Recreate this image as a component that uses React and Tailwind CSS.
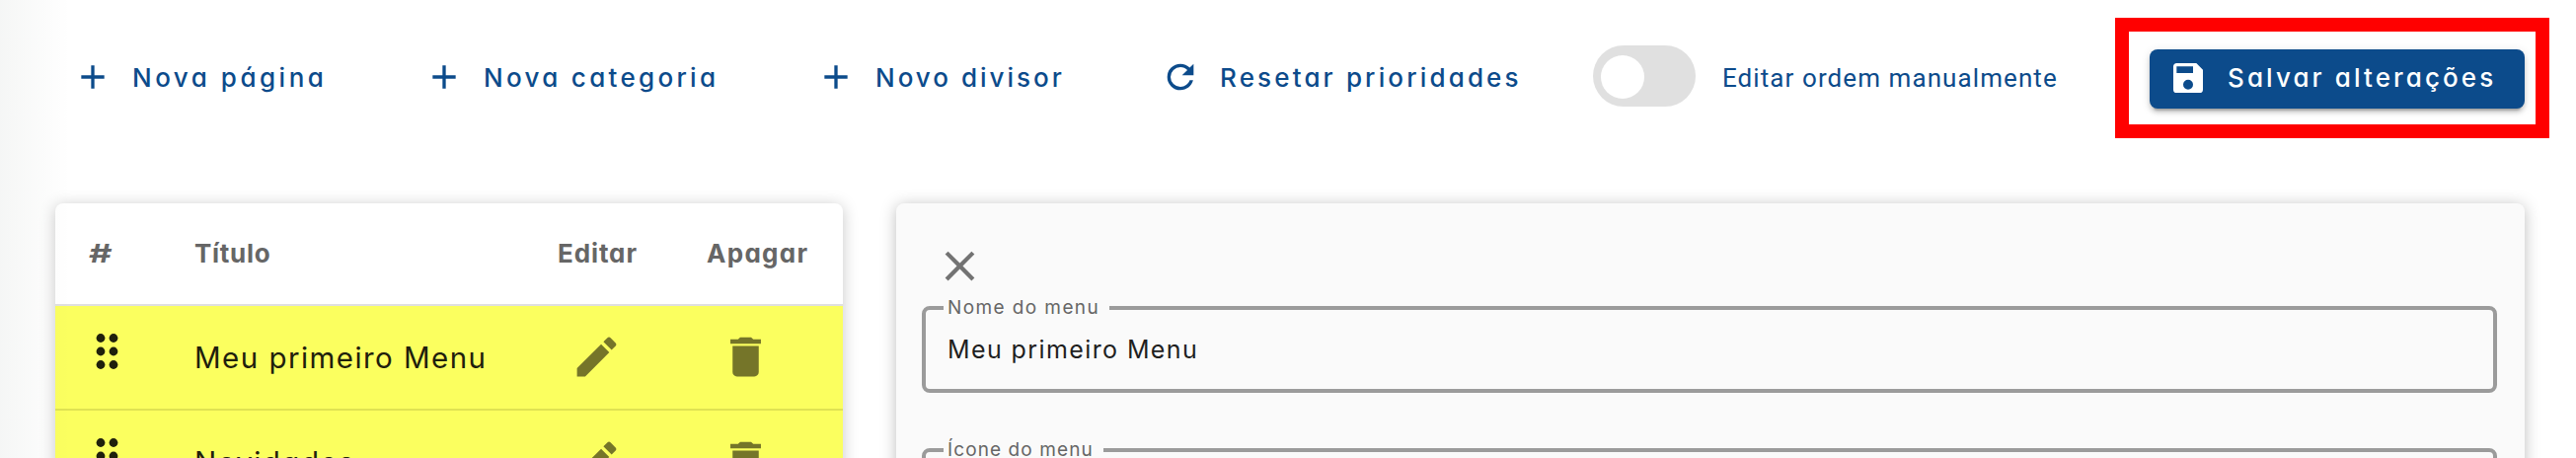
const ICONS = {
  plus: "M19 13H13V19H11V13H5V11H11V5H13V11H19V13Z",
  refresh:
    "M17.65 6.35C16.2 4.9 14.21 4 12 4A8 8 0 0 0 4 12A8 8 0 0 0 12 20C15.73 20 18.84 17.45 19.73 14H17.65C16.83 16.33 14.61 18 12 18A6 6 0 0 1 6 12A6 6 0 0 1 12 6C13.66 6 15.14 6.69 16.22 7.78L13 11H20V4L17.65 6.35Z",
  save: "M15 9H5V5H15M12 19A3 3 0 0 1 9 16A3 3 0 0 1 12 13A3 3 0 0 1 15 16A3 3 0 0 1 12 19M17 3H5C3.89 3 3 3.9 3 5V19A2 2 0 0 0 5 21H19A2 2 0 0 0 21 19V7L17 3Z",
  pencil:
    "M20.71 7.04C21.1 6.65 21.1 6 20.71 5.63L18.37 3.29C18 2.9 17.35 2.9 16.96 3.29L15.12 5.12L18.87 8.87M3 17.25V21H6.75L17.81 9.93L14.06 6.18L3 17.25Z",
  trash:
    "M19 4H15.5L14.5 3H9.5L8.5 4H5V6H19M6 19A2 2 0 0 0 8 21H16A2 2 0 0 0 18 19V7H6V19Z",
  close:
    "M19 6.41L17.59 5L12 10.59L6.41 5L5 6.41L10.59 12L5 17.59L6.41 19L12 13.41L17.59 19L19 17.59L13.41 12L19 6.41Z",
};

function Icon({ name, className }) {
  return (
    <svg viewBox="0 0 24 24" fill="currentColor" fillRule="evenodd" className={`shrink-0 ${className}`}>
      <path d={ICONS[name]} />
    </svg>
  );
}

function ToolButton({ icon, label, className, text }) {
  return (
    <div className={`flex shrink-0 items-start gap-5 ${className}`}>
      <Icon name={icon} className="size-10" />
      <span className={`pt-px text-[26px] leading-10 font-medium ${text}`}>{label}</span>
    </div>
  );
}

function Row({ title, text }) {
  return (
    <div className="flex h-[106px] shrink-0 border-b-2 border-[#dfe252] bg-[#fbff5f] text-[#1f200c]">
      <div className="w-[142px] pt-7 pl-[41px]">
        <svg viewBox="0 0 24 38" className="h-[38px] w-6" fill="currentColor">
          {[4.5, 18, 31.5].map((y) => (
            <g key={y}>
              <circle cx="5" cy={y} r="4.4" />
              <circle cx="18" cy={y} r="4.4" />
            </g>
          ))}
        </svg>
      </div>
      <div className={`-ml-px w-[381px] pt-8 text-[29.5px] leading-10 ${text}`}>{title}</div>
      <Icon name="pencil" className="mt-[25px] size-[53px] text-[#757529]" />
      <Icon name="trash" className="mt-[25px] ml-[98px] size-[53px] text-[#757529]" />
    </div>
  );
}

function Field({ label, value, labelText, gap }) {
  return (
    <div className="relative h-[88px] shrink-0 rounded-lg border-4 border-[#9b9b9b]">
      <div className={`absolute -top-4 left-[18px] h-7 bg-[#fafafa] pl-[4px] text-[19px] leading-7 whitespace-nowrap text-[#666] ${gap} ${labelText}`}>
        {label}
      </div>
      <div className="pt-[24px] pl-[22px] text-[25px] leading-8 tracking-[1.4px] text-[#1f1f1f]">{value}</div>
    </div>
  );
}

export default function App() {
  return (
    <div className="relative flex h-[464px] w-[2610px] flex-col overflow-hidden bg-white font-[Inter,sans-serif] whitespace-nowrap [font-feature-settings:'cv11']">
      <div className="flex h-[206px] shrink-0 items-start text-[#0c4b8b]">
        <ToolButton icon="plus" label="Nova página" className="mt-[58px] ml-[74px] w-[356px]" text="tracking-[3.5px]" />
        <ToolButton icon="plus" label="Nova categoria" className="mt-[58px] w-[397px]" text="tracking-[3.3px]" />
        <ToolButton icon="plus" label="Novo divisor" className="mt-[58px] w-[349px]" text="tracking-[3px]" />
        <ToolButton icon="refresh" label="Resetar prioridades" className="mt-[58px] w-[438px]" text="tracking-[3.15px]" />
        <div className="mt-[46px] h-[62px] w-[104px] shrink-0 rounded-[31px] bg-[#e0e0e0] pt-[10px] pl-2">
          <div className="size-11 rounded-full bg-white" />
        </div>
        <div className="mt-[59px] ml-[27px] w-[398px] shrink-0 font-[Roboto,sans-serif] text-[26px] leading-10 tracking-[1.08px]">
          Editar ordem manualmente
        </div>
        <div className="mt-[18px] h-[122px] w-[440px] shrink-0 border-[14px] border-[#ff0000] pt-[18px] pl-[21px]">
          <div className="flex h-[60px] w-[380px] items-start rounded-lg bg-[#0c4b8b] pt-[9px] pl-[19px] text-white shadow-[0_6px_2px_-4px_rgba(0,0,0,0.2),0_4px_4px_rgba(0,0,0,0.14),0_2px_10px_rgba(0,0,0,0.12)]">
            <Icon name="save" className="size-10" />
            <span className="ml-[20px] text-[26px] leading-10 font-medium tracking-[3.1px]">Salvar alterações</span>
          </div>
        </div>
      </div>
      <div className="flex h-[258px] shrink-0 items-start gap-[54px] pl-14">
        <div className="flex h-[320px] w-[798px] shrink-0 flex-col overflow-hidden rounded-t-lg bg-white shadow-[0_2px_16px_rgba(0,0,0,0.22)]">
          <div className="flex h-[104px] shrink-0 border-b-2 border-[#e0e0e0] pt-[31px] text-[26px] leading-10 font-bold text-[#666]">
            <div className="w-[141px] pl-[34px]">
              <span className="inline-block origin-left scale-x-140">#</span>
            </div>
            <div className="w-[368px] tracking-[0.7px]">Título</div>
            <div className="w-[151px] tracking-[0.9px]">Editar</div>
            <div className="tracking-[1.3px]">Apagar</div>
          </div>
          <Row title="Meu primeiro Menu" text="tracking-[1.45px]" />
          <Row title="Novidades" text="tracking-[1.45px]" />
        </div>
        <div className="flex h-[320px] w-[1650px] shrink-0 flex-col rounded-t-lg bg-[#fafafa] px-[26px] pr-[28px] shadow-[0_2px_16px_rgba(0,0,0,0.26)]">
          <Icon name="close" className="mt-[38px] mb-[15px] ml-[13px] size-[51px] text-[#737373]" />
          <Field label="Nome do menu" value="Meu primeiro Menu" gap="w-[168px]" labelText="tracking-[1.4px]" />
          <div className="h-14 shrink-0" />
          <Field label="Ícone do menu" value="" gap="w-[162px]" labelText="tracking-[1.1px]" />
        </div>
      </div>
      <div className="pointer-events-none absolute inset-y-0 left-0 w-[72px] bg-linear-to-r from-[#0020100a] to-transparent" />
    </div>
  );
}
